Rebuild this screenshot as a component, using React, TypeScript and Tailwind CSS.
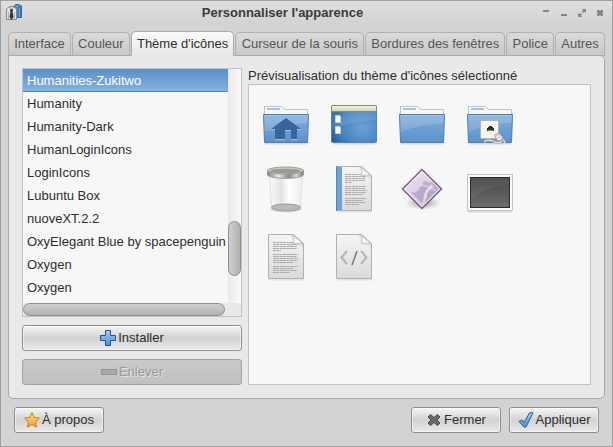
import { useState, type ReactNode } from "react";

const TABS = [
  "Interface",
  "Couleur",
  "Thème d'icônes",
  "Curseur de la souris",
  "Bordures des fenêtres",
  "Police",
  "Autres",
];

const THEMES = [
  "Humanities-Zukitwo",
  "Humanity",
  "Humanity-Dark",
  "HumanLoginIcons",
  "LoginIcons",
  "Lubuntu Box",
  "nuoveXT.2.2",
  "OxyElegant Blue by spacepenguin",
  "Oxygen",
  "Oxygen",
];

const TEXT_LINES = [32, 31, 30, 30, 10, 0, 31, 30, 32, 31, 26, 0, 31, 26, 29, 21];

function AppLogo() {
  return (
    <svg width="18" height="18" viewBox="0 0 18 18" aria-hidden="true">
      <path d="M8.500 2.500 10.500.5h3l3 1.500v11.500h-5z" fill="#3f7cb8" stroke="#2d659c" />
      <path d="M14.500 4v9" stroke="#6ea3d6" />
      <path d="m10 1 2 2 2-2" fill="none" stroke="#7fb0dc" />
      <path d="M1.500 5 4.500 2.500h4l3 2.500v10.500h-10z" fill="#e4e4e4" stroke="#8a8a8a" />
      <path d="M5.300 5h2.400l.3 2-.5 1 1 5L6.500 16 4.500 13l1-5-.5-1z" fill="#333" />
      <path d="m4 3 2.500 2L9 3" fill="none" stroke="#999" />
      <path d="M3.500 8v7M9.500 8v7" stroke="#b0b0b0" />
    </svg>
  );
}

function Folder({ children }: { children?: ReactNode }) {
  return (
    <svg width="48" height="48" viewBox="0 0 48 48" aria-hidden="true">
      <path d="M3 46.500h42" stroke="#000" strokeOpacity=".12" strokeWidth="2" />
      <path d="M2.500 18V9.500h17l3 3h23V18z" fill="#f8f8f8" stroke="#c2c2c2" />
      <path d="M5 12h13" stroke="#a3c3e6" strokeWidth="2" />
      <path d="M1.500 17.500h45l-1 28h-43z" fill="url(#folderBlue)" stroke="#4a7eb4" />
      <path d="M2.500 18.500h43" stroke="#9dc1e6" />
      <path d="M2 19h44l-.3 7C30 27 15 30 2.500 35z" fill="#fff" fillOpacity=".14" />
      {children}
    </svg>
  );
}

function HomeFolder() {
  return (
    <Folder>
      <path d="M24 21 9 32h4v10h10v-9h6v9h6V32h4z" fill="#346699" />
      <path d="M13 42.500h10M29 42.500h6M23 33.500h6M9 32.500h4M35 32.500h4" stroke="#9cc2e8" />
    </Folder>
  );
}

function NetworkFolder() {
  return (
    <Folder>
      <rect x="14.500" y="23.500" width="18" height="18" rx="1.500" fill="#f4f4f2" stroke="#b4b3aa" />
      <path d="M21 34v-3h1v-1h1v-1h3v1h1v1h1v3z" fill="#2d302c" />
      <path d="M22 33.500h5" stroke="#a29323" />
      <path d="M34 42c3 0 5 2 4.500 4M36 44c-4 4-8 0-11-.5s-7-.5-6 2" fill="none" stroke="#a5a5a5" strokeWidth="2.500" />
      <path d="M34 42c3 0 5 2 4.500 4M36 44c-4 4-8 0-11-.5s-7-.5-6 2" fill="none" stroke="#f2f2f2" />
      <path d="m28.500 38 4-2 4 4-1 3-4 1z" fill="#efefef" stroke="#a0a0a0" />
      <path d="m30 39 3-1.500M31.500 41l3-1.500" stroke="#bbb" />
    </Folder>
  );
}

function Desktop() {
  return (
    <svg width="48" height="48" viewBox="0 0 48 48" aria-hidden="true">
      <path d="M3 46.500h42" stroke="#000" strokeOpacity=".12" strokeWidth="2" />
      <rect x="1.500" y="8.500" width="45" height="37" rx="1.500" fill="url(#deskBlue)" stroke="#4a83bf" />
      <path d="M2 15h44v8C30 24 14 27 2 33z" fill="#fff" fillOpacity=".1" />
      <rect x="1.500" y="8.500" width="45" height="6" rx="1" fill="url(#deskBar)" stroke="#858b62" />
      <path d="M5.500 18.500h4l1 1v6h-5zM5.500 29.500h4l1 1v6h-5z" fill="#f3f3f1" stroke="#cdcdca" />
    </svg>
  );
}

function Trash() {
  return (
    <svg width="48" height="48" viewBox="0 0 48 48" aria-hidden="true">
      <ellipse cx="24" cy="44" rx="16" ry="3.500" fill="#000" fillOpacity=".1" />
      <path d="m7.500 10 2 33c5 4 24 4 29 0l2-33z" fill="url(#glass)" stroke="#e0e0e0" />
      <ellipse cx="24" cy="42.500" rx="14.500" ry="3.500" fill="#b8bab6" stroke="#9a9d98" />
      <path d="M5.500 5v5c3 4.500 33 4.500 36 0V5z" fill="url(#metal)" stroke="#8c8f8a" strokeWidth=".8" />
      <ellipse cx="23.500" cy="5.500" rx="18" ry="3.500" fill="#c9ccc7" stroke="#8c8f8a" strokeWidth=".8" />
      <ellipse cx="23.500" cy="6" rx="15" ry="2.300" fill="#979c95" />
    </svg>
  );
}

function Paper({ children }: { children?: ReactNode }) {
  return (
    <svg width="48" height="48" viewBox="0 0 48 48" aria-hidden="true">
      <path d="M7 46.500h35" stroke="#000" strokeOpacity=".08" strokeWidth="2" />
      <path d="M6.500 1.500h25l10 9v35h-35z" fill="url(#paper)" stroke="#b0b0b0" />
      {children}
      <path d="M28 2h4l9.500 9v4c-3-3-7-4-11-4 1-3 0-6-2.500-9z" fill="#000" fillOpacity=".06" />
      <path d="M30.500 2c2 3 2 6 1 8.500 3-.8 7-.6 9.500.5z" fill="#fff" stroke="#c8c8c8" />
    </svg>
  );
}

function TextLines({ x, scale }: { x: number; scale: number }) {
  return (
    <g stroke="#aaa" strokeDasharray="3 .4">
      {TEXT_LINES.map((w, i) => (
        <path key={i} d={`M${x} ${9.5 + i * 2}h${w * scale}`} />
      ))}
    </g>
  );
}

function Diamond() {
  return (
    <svg width="48" height="48" viewBox="0 0 48 48" aria-hidden="true">
      <ellipse cx="25" cy="38" rx="18" ry="7" fill="url(#softShadow)" />
      <path d="M24 4.500 43.500 24 24 43.500 4.500 24z" fill="url(#violet)" stroke="#7d5689" strokeWidth="1.400" />
      <path d="m13 28 2-1 2 1 2-2 2-1v-3l3-1 1-4 3-1 2 2 5-1 6 7-14 14c-2 1-4-1-6-3z" fill="#8f72a8" fillOpacity=".4" />
      <path d="M24 40c2-6 1-10 4-15 2-2 4-4 5-6l3 3c-4 2-7 5-7 9l-2 6z" fill="#fff" fillOpacity=".55" />
      <path d="M22 20c5 0 11 3 16 6" fill="none" stroke="#fff" strokeOpacity=".35" strokeWidth="2" />
      <path d="M24 6.500 41.500 24 24 41.500 6.500 24z" fill="none" stroke="#fff" strokeOpacity=".7" />
    </svg>
  );
}

function Terminal() {
  return (
    <svg width="48" height="48" viewBox="0 0 48 48" aria-hidden="true">
      <path d="M2 46.500h44" stroke="#000" strokeOpacity=".12" strokeWidth="2" />
      <rect x="1.500" y="9.500" width="45" height="36" fill="#fafafa" stroke="#c4c4c4" />
      <rect x="4.500" y="12.500" width="39" height="30" fill="url(#screen)" stroke="#2b2b2b" />
      <path d="M5 13h38v6C28 21 15 26 5 34z" fill="#fff" fillOpacity=".05" />
    </svg>
  );
}

function Gradients() {
  return (
    <svg width="0" height="0" className="absolute" aria-hidden="true">
      <defs>
        <linearGradient id="folderBlue" x2="0" y2="1">
          <stop stopColor="#82aedb" />
          <stop offset="1" stopColor="#5b92cb" />
        </linearGradient>
        <radialGradient id="deskBlue" cx=".7" cy=".6" r=".75">
          <stop stopColor="#6da0d4" />
          <stop offset=".65" stopColor="#4583c0" />
          <stop offset="1" stopColor="#285f98" />
        </radialGradient>
        <linearGradient id="deskBar" x2="0" y2="1">
          <stop stopColor="#f4f5e5" />
          <stop offset="1" stopColor="#cfd2b5" />
        </linearGradient>
        <linearGradient id="glass">
          <stop stopColor="#fafafa" />
          <stop offset=".35" stopColor="#e3e3e3" />
          <stop offset=".6" stopColor="#fff" />
          <stop offset="1" stopColor="#ececec" />
        </linearGradient>
        <linearGradient id="metal">
          <stop stopColor="#7c807a" />
          <stop offset=".3" stopColor="#e8eae6" />
          <stop offset=".6" stopColor="#858984" />
          <stop offset=".8" stopColor="#d8dad6" />
          <stop offset="1" stopColor="#777b75" />
        </linearGradient>
        <linearGradient id="paper" x2="0" y2="1">
          <stop stopColor="#f5f5f5" />
          <stop offset="1" stopColor="#dadada" />
        </linearGradient>
        <linearGradient id="violet" x2=".6" y2="1">
          <stop stopColor="#f0e9f3" />
          <stop offset="1" stopColor="#cdbdd8" />
        </linearGradient>
        <linearGradient id="screen" x2="0" y2="1">
          <stop stopColor="#484848" />
          <stop offset="1" stopColor="#6c6c6c" />
        </linearGradient>
        <radialGradient id="softShadow">
          <stop stopOpacity=".35" />
          <stop offset="1" stopOpacity="0" />
        </radialGradient>
        <linearGradient id="star" x2="0" y2="1">
          <stop stopColor="#fde48a" />
          <stop offset="1" stopColor="#f59a23" />
        </linearGradient>
        <linearGradient id="blueGlyph" x2="0" y2="1">
          <stop stopColor="#a5cdf0" />
          <stop offset="1" stopColor="#4c91d3" />
        </linearGradient>
      </defs>
    </svg>
  );
}

function PlusIcon() {
  return (
    <svg width="16" height="16" viewBox="0 0 16 16" aria-hidden="true">
      <path d="M5.500.5h5v5h5v5h-5v5h-5v-5h-5v-5h5z" fill="url(#blueGlyph)" stroke="#24548a" />
    </svg>
  );
}

function MinusIcon() {
  return (
    <svg width="16" height="16" viewBox="0 0 16 16" aria-hidden="true">
      <rect x=".5" y="5.500" width="15" height="5" fill="#a9a9a5" stroke="#969692" />
    </svg>
  );
}

function StarIcon() {
  return (
    <svg width="16" height="16" viewBox="0 0 16 16" aria-hidden="true">
      <path
        d="m8 .7 2.200 4.800 5.200.6-3.800 3.600 1 5.500L8 12.500l-4.600 2.700 1-5.500L.6 6.100l5.200-.6z"
        fill="url(#star)"
        stroke="#c8801c"
        strokeLinejoin="round"
      />
    </svg>
  );
}

function CrossIcon() {
  return (
    <svg width="16" height="16" viewBox="0 0 16 16" aria-hidden="true">
      <path
        d="m4.500 2.500 3.500 3 3.500-3 2.500 2.500-3 3 3 3-2.500 2.500-3.500-3-3.500 3L2 11l3-3-3-3z"
        fill="#6a6a6a"
        stroke="#4b4b4b"
        strokeLinejoin="round"
      />
    </svg>
  );
}

function CheckIcon() {
  return (
    <svg width="16" height="16" viewBox="0 0 16 16" aria-hidden="true">
      <path
        d="M1 9.500 4 8l2.200 2.500L11.500.8h3.500L8 15H6z"
        fill="url(#blueGlyph)"
        stroke="#285b91"
        strokeLinejoin="round"
      />
    </svg>
  );
}

type PushButtonProps = {
  icon: ReactNode;
  label: string;
  disabled?: boolean;
  className?: string;
};

function PushButton({ icon, label, disabled, className = "" }: PushButtonProps) {
  return (
    <button
      type="button"
      disabled={disabled}
      className={`flex h-[26px] items-center justify-center gap-0.5 rounded-[3px] border ${
        disabled
          ? "border-[#a2a2a2] bg-linear-to-b from-[#cacaca] to-[#c0c0c0] text-[#999] [text-shadow:1px_1px_0_#e4e4e4]"
          : "border-[#8f8f8f] bg-linear-to-b from-[#f6f6f6] via-[#d2d2d2] to-[#e9e9e9] shadow-[inset_0_0_0_1px_#ffffff80]"
      } ${className}`}
    >
      {icon}
      {label}
    </button>
  );
}

const windowButtons = [
  { label: "Enrouler", path: "M1 1h6v2H1z" },
  { label: "Réduire", path: "M1 5h6v2H1z" },
  { label: "Agrandir", path: "M4 0h4v4L6.800 2.800 5.500 4 4 2.500l1.200-1.300zM0 4l1.200 1.200L2.500 4 4 5.500 2.800 6.800 4 8H0z" },
  { label: "Fermer la fenêtre", path: "M1 1h2l1 1 1-1h2v2L6 4l1 1v2H5L4 6 3 7H1V5l1-1-1-1z" },
];

export default function App() {
  const [tab, setTab] = useState(2);
  const [theme, setTheme] = useState(0);

  return (
    <main className="flex min-h-screen flex-col border border-[#a0a0a0] bg-[#d3d3d3] px-[7px] font-['Liberation_Sans',Arial,sans-serif] text-[13px] leading-4 text-[#2e2e2e]">
      <Gradients />

      {/* Title bar */}
      <header className="-mx-[7px] flex h-[23px] items-center bg-linear-to-b from-[#dedede] to-[#d3d3d3] px-1">
        <AppLogo />
        <h1 className="flex-1 text-center font-bold text-[#3b3b3b]">Personnaliser l'apparence</h1>
        <div className="flex gap-2.5 pr-1">
          {windowButtons.map((b) => (
            <button key={b.label} type="button" aria-label={b.label}>
              <svg width="8" height="8" viewBox="0 0 8 8">
                <path d={b.path} fill="#858585" />
              </svg>
            </button>
          ))}
        </div>
      </header>

      {/* Tabs */}
      <div role="tablist" className="z-10 -mb-px mt-[7px] flex items-end gap-px">
        {TABS.map((name, i) => (
          <button
            key={name}
            type="button"
            role="tab"
            aria-selected={tab === i}
            onClick={() => setTab(i)}
            className={`flex-auto rounded-t-[5px] border whitespace-nowrap ${
              tab === i
                ? "h-[25px] border-[#a9a9a9] border-b-[#e9e9e9] bg-linear-to-b from-[#fafafa] to-[#e9e9e9]"
                : "h-6 border-[#b0b0b0] border-b-[#a9a9a9] bg-linear-to-b from-[#dadada] to-[#c9c9c9] text-[#555]"
            }`}
          >
            {name}
          </button>
        ))}
      </div>

      {/* Icon theme page */}
      <section className="flex flex-1 gap-1.5 rounded-b-[5px] rounded-tr-[5px] border border-[#a9a9a9] bg-[#e9e9e9] p-[13px] pt-3">
        <div className="flex w-[220px] flex-col gap-2">
          <div className="flex flex-1 flex-col border border-[#c2c2c2] bg-[#f7f7f7]">
            <div className="flex flex-1">
              <ul role="listbox" aria-label="Thèmes d'icônes" className="w-[205px] overflow-hidden">
                {THEMES.map((name, i) => (
                  <li
                    key={i}
                    role="option"
                    aria-selected={theme === i}
                    onClick={() => setTheme(i)}
                    className={`h-[23px] pl-1 leading-[23px] whitespace-nowrap ${
                      theme === i
                        ? "border-b border-[#4d84bd] bg-linear-to-b from-[#5a8fc9] to-[#86b1df] text-white"
                        : ""
                    }`}
                  >
                    {name}
                  </li>
                ))}
              </ul>
              <div className="flex flex-1 flex-col justify-end bg-linear-to-r from-[#e9e9e9] to-[#fafafa] pb-[27px]">
                <div className="h-[55px] rounded-full border border-[#8f8f8f] bg-linear-to-r from-[#cfcfcf] to-[#b2b2b2]" />
              </div>
            </div>
            <div className="flex h-[13px] bg-[#e9e9e9]">
              <div className="w-[202px] rounded-full border border-[#8f8f8f] bg-linear-to-b from-[#cfcfcf] to-[#b2b2b2]" />
            </div>
          </div>
          <PushButton icon={<PlusIcon />} label="Installer" />
          <PushButton icon={<MinusIcon />} label="Enlever" disabled />
        </div>

        <div className="flex flex-1 flex-col">
          <h2>Prévisualisation du thème d'icônes sélectionné</h2>
          <div className="grid flex-1 grid-cols-[repeat(4,48px)] content-start gap-5 border border-[#c2c2c2] bg-[#f7f7f7] px-[13px] py-3">
            <HomeFolder />
            <Desktop />
            <Folder />
            <NetworkFolder />
            <Trash />
            <Paper>
              <path d="M7 2h5v43H7z" fill="#6ea3da" />
              <path d="M6.500 1v45" stroke="#4f86c0" />
              <TextLines x={15} scale={0.68} />
            </Paper>
            <Diamond />
            <Terminal />
            <Paper>
              <TextLines x={11} scale={0.8} />
            </Paper>
            <Paper>
              <path d="m17 18-5.500 6.500L17 31M31 18l5.500 6.500L31 31" fill="none" stroke="#b3b3b3" strokeWidth="2" />
              <path d="m27 18-5 14" stroke="#777" strokeWidth="1.500" />
            </Paper>
          </div>
        </div>
      </section>

      {/* Dialog actions */}
      <footer className="flex gap-2 px-1.5 pt-2 pb-[13px]">
        <PushButton icon={<StarIcon />} label="À propos" className="mr-auto w-[90px]" />
        <PushButton icon={<CrossIcon />} label="Fermer" className="w-[90px]" />
        <PushButton icon={<CheckIcon />} label="Appliquer" className="w-[90px]" />
      </footer>
    </main>
  );
}
